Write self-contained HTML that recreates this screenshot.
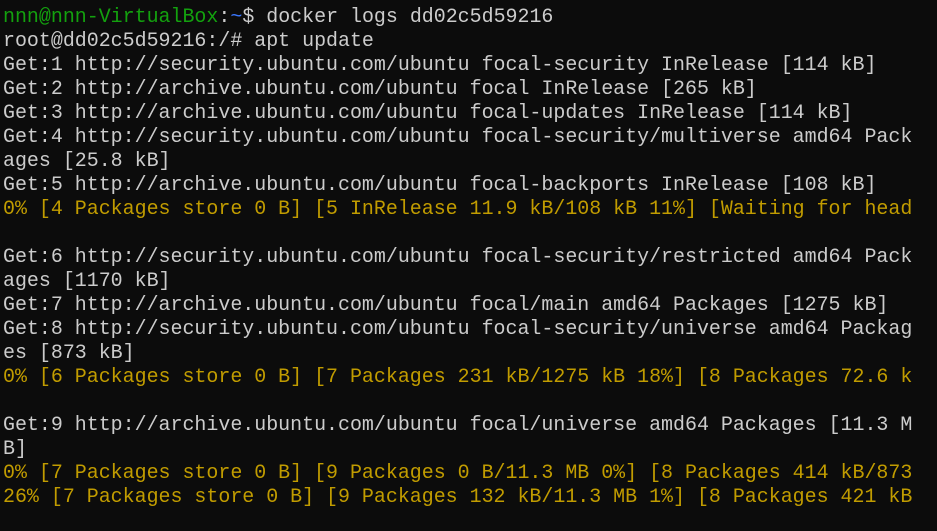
<!DOCTYPE html>
<html><head><style>
html,body{margin:0;background:#0c0c0c;width:937px;height:531px;overflow:hidden}
pre{margin:0;position:absolute;left:3px;top:5px;font-family:"Liberation Mono","DejaVu Sans Mono",monospace;font-size:19.95px;line-height:24px;color:#cccccc;white-space:pre}
.g{color:#13a10e}.b{color:#3b78ff}.y{color:#c19c00}
</style></head><body><pre><span class="g">nnn@nnn-VirtualBox</span>:<span class="b">~</span>$ docker logs dd02c5d59216
root@dd02c5d59216:/# apt update
Get:1 http://security.ubuntu.com/ubuntu focal-security InRelease [114 kB]
Get:2 http://archive.ubuntu.com/ubuntu focal InRelease [265 kB]
Get:3 http://archive.ubuntu.com/ubuntu focal-updates InRelease [114 kB]
Get:4 http://security.ubuntu.com/ubuntu focal-security/multiverse amd64 Pack
ages [25.8 kB]
Get:5 http://archive.ubuntu.com/ubuntu focal-backports InRelease [108 kB]
<span class="y">0% [4 Packages store 0 B] [5 InRelease 11.9 kB/108 kB 11%] [Waiting for head</span>

Get:6 http://security.ubuntu.com/ubuntu focal-security/restricted amd64 Pack
ages [1170 kB]
Get:7 http://archive.ubuntu.com/ubuntu focal/main amd64 Packages [1275 kB]
Get:8 http://security.ubuntu.com/ubuntu focal-security/universe amd64 Packag
es [873 kB]
<span class="y">0% [6 Packages store 0 B] [7 Packages 231 kB/1275 kB 18%] [8 Packages 72.6 k</span>

Get:9 http://archive.ubuntu.com/ubuntu focal/universe amd64 Packages [11.3 M
B]
<span class="y">0% [7 Packages store 0 B] [9 Packages 0 B/11.3 MB 0%] [8 Packages 414 kB/873</span>
<span class="y">26% [7 Packages store 0 B] [9 Packages 132 kB/11.3 MB 1%] [8 Packages 421 kB</span></pre></body></html>
